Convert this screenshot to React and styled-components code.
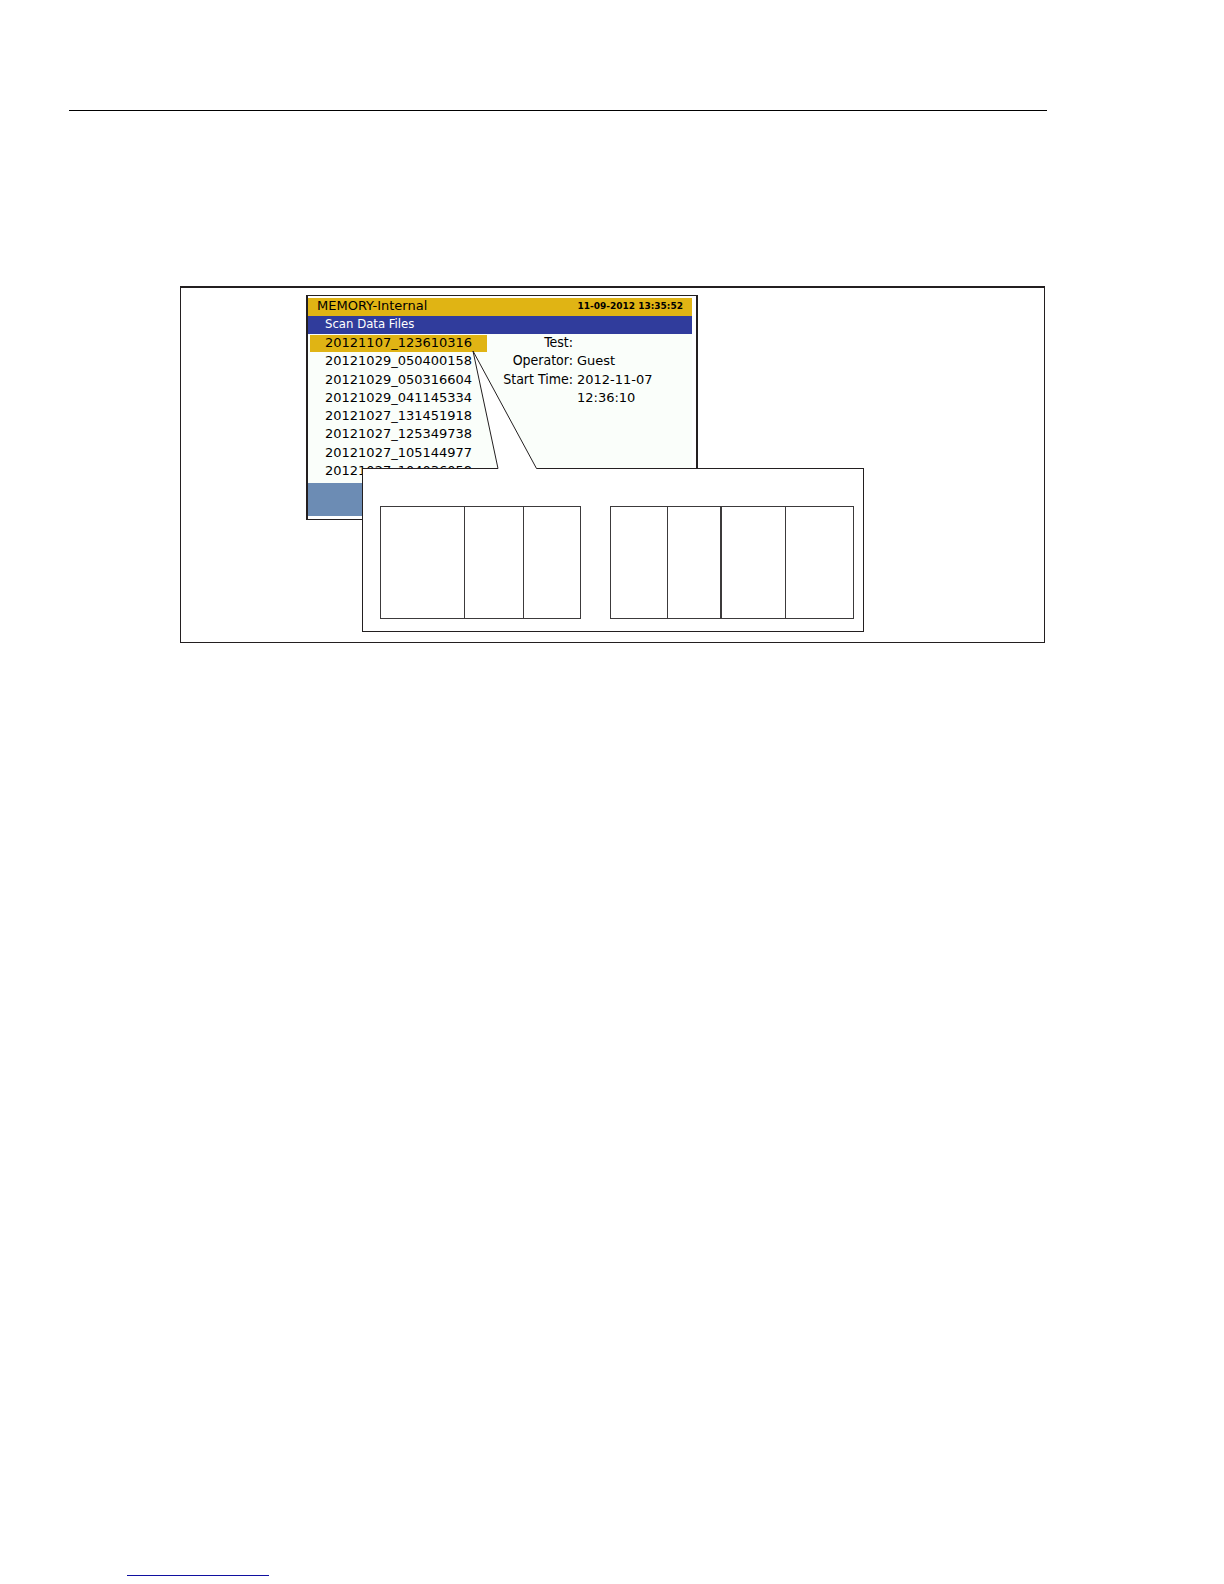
import styled, { createGlobalStyle } from 'styled-components';

const GlobalStyle = createGlobalStyle`
	* {
		box-sizing: border-box;
	}
	body {
		margin: 0;
		background-color: #fff;
	}
`;

const narrow = "'DejaVu Sans Condensed', 'DejaVu Sans', sans-serif";

const Page = styled.main`
	min-height: 100vh;
	display: flex;
	flex-direction: column;
	padding: 110px 177px 8px 69px;
	font-family: 'DejaVu Sans', sans-serif;
	font-size: 13px;
	color: #000;
`;

const HeaderRule = styled.hr`
	width: 100%;
	height: 1px;
	margin: 0;
	border: 0;
	background-color: #000;
`;

const FooterRule = styled.hr`
	width: 142px;
	height: 1px;
	margin: auto 0 0 58px;
	border: 0;
	background-color: #1010a0;
`;

const Figure = styled.figure`
	margin: 175px 2px 40px 111px;
	padding: 7px 0 10px 125px;
	border: 1px solid #231f20;
	border-top-width: 2px;
`;

const Stage = styled.div`
	position: relative;
	max-width: 558px;
	padding-bottom: 112px;
`;

const Screen = styled.section`
	width: 392px;
	padding: 2px 4px 3px 0;
	border: solid #231f20;
	border-width: 1px 2px;
`;

const TitleBar = styled.header`
	height: 18px;
	display: flex;
	justify-content: space-between;
	padding: 0 9px;
	line-height: 16px;
	background-color: #e0b414;
`;

const Title = styled.h1`
	margin: 0;
	font-size: 13px;
	font-weight: 400;
`;

const Clock = styled.time`
	font-size: 9px;
	font-weight: 700;
`;

const Section = styled.h2`
	height: 18px;
	margin: 0;
	padding: 0 17px;
	font-family: ${narrow};
	font-size: 13px;
	font-weight: 400;
	line-height: 16px;
	color: #fff;
	background-color: #303c9c;
`;

const Content = styled.div`
	height: 149px;
	display: flex;
	padding: 1px 0 2px 2px;
	line-height: 15px;
	background-color: #fafefa;
`;

const FileList = styled.ul`
	width: 177px;
	margin: 0;
	padding: 0;
	display: flex;
	flex-direction: column;
	list-style: none;
`;

const File = styled.li`
	flex: 1;
	padding-left: 15px;
	background: ${(props) =>
		props.$selected ? 'linear-gradient(#e0b414, #e0b414) top / 100% 17px no-repeat' : 'none'};
`;

const Details = styled.dl`
	flex: 1;
	margin: 0;
	display: grid;
	grid-template-columns: 86px 1fr;
	grid-template-rows: repeat(8, 1fr);
	column-gap: 4px;
`;

const Label = styled.dt`
	font-family: ${narrow};
	font-size: 14px;
	text-align: right;
	white-space: nowrap;
`;

const Value = styled.dd`
	margin: 0;
`;

const SoftKeys = styled.footer`
	height: 33px;
	background-color: #6c8cb4;
`;

// Lies over the lower part of the screen
const Callout = styled.div`
	position: absolute;
	left: 56px;
	right: 0;
	bottom: 0;
	height: 164px;
	display: flex;
	align-items: flex-start;
	gap: 29px;
	padding: 37px 9px 0 17px;
	border: 1px solid #231f20;
	background-color: #fff;
`;

const Pointer = styled.svg`
	position: absolute;
	left: 109px;
	top: -119px;
	width: 66px;
	height: 120px;
`;

const Fields = styled.div`
	flex: ${(props) => props.$grow};
	height: 113px;
	display: grid;
	grid-template-columns: ${(props) => props.$columns};
	border: 1px solid #3c3a3b;
`;

const Field = styled.div`
	border-left: ${(props) => props.$line}px solid #3c3a3b;
`;

const files = [
	'20121107_123610316',
	'20121029_050400158',
	'20121029_050316604',
	'20121029_041145334',
	'20121027_131451918',
	'20121027_125349738',
	'20121027_105144977',
	'20121027_104036058',
];

const details = [
	['Test:', ''],
	['Operator:', 'Guest'],
	['Start Time:', '2012-11-07'],
	['', '12:36:10'],
];

const MemoryScreen = () => {
	return (
		<Screen>
			<TitleBar>
				<Title>MEMORY-Internal</Title>
				<Clock>11-09-2012 13:35:52</Clock>
			</TitleBar>
			<Section>Scan Data Files</Section>
			<Content>
				<FileList>
					{files.map((name, i) => (
						<File key={name} $selected={i === 0}>
							{name}
						</File>
					))}
				</FileList>
				<Details>
					{details.map(([label, value]) => [
						<Label key={label + 'label'}>{label}</Label>,
						<Value key={label + 'value'}>{value}</Value>,
					])}
				</Details>
			</Content>
			<SoftKeys />
		</Screen>
	);
};

const FileNameCallout = () => {
	return (
		<Callout>
			<Pointer viewBox="0 0 66 120" aria-hidden="true">
				<path d="M26 120 V118.5 L1 1 L64.5 118.5 V120 Z" fill="#fff" />
				<path d="M26 118.5 L1 1 L64.5 118.5" fill="none" stroke="#231f20" />
			</Pointer>
			<Fields $grow={201} $columns="83fr 59fr 57fr">
				<Field $line={0} />
				<Field $line={1} />
				<Field $line={1} />
			</Fields>
			<Fields $grow={244} $columns="56fr 53fr 65fr 68fr">
				<Field $line={0} />
				<Field $line={1} />
				<Field $line={2} />
				<Field $line={1} />
			</Fields>
		</Callout>
	);
};

const App = () => {
	return (
		<>
			<GlobalStyle />
			<Page>
				<HeaderRule />
				<Figure>
					<Stage>
						<MemoryScreen />
						<FileNameCallout />
					</Stage>
				</Figure>
				<FooterRule />
			</Page>
		</>
	);
};

export default App;
